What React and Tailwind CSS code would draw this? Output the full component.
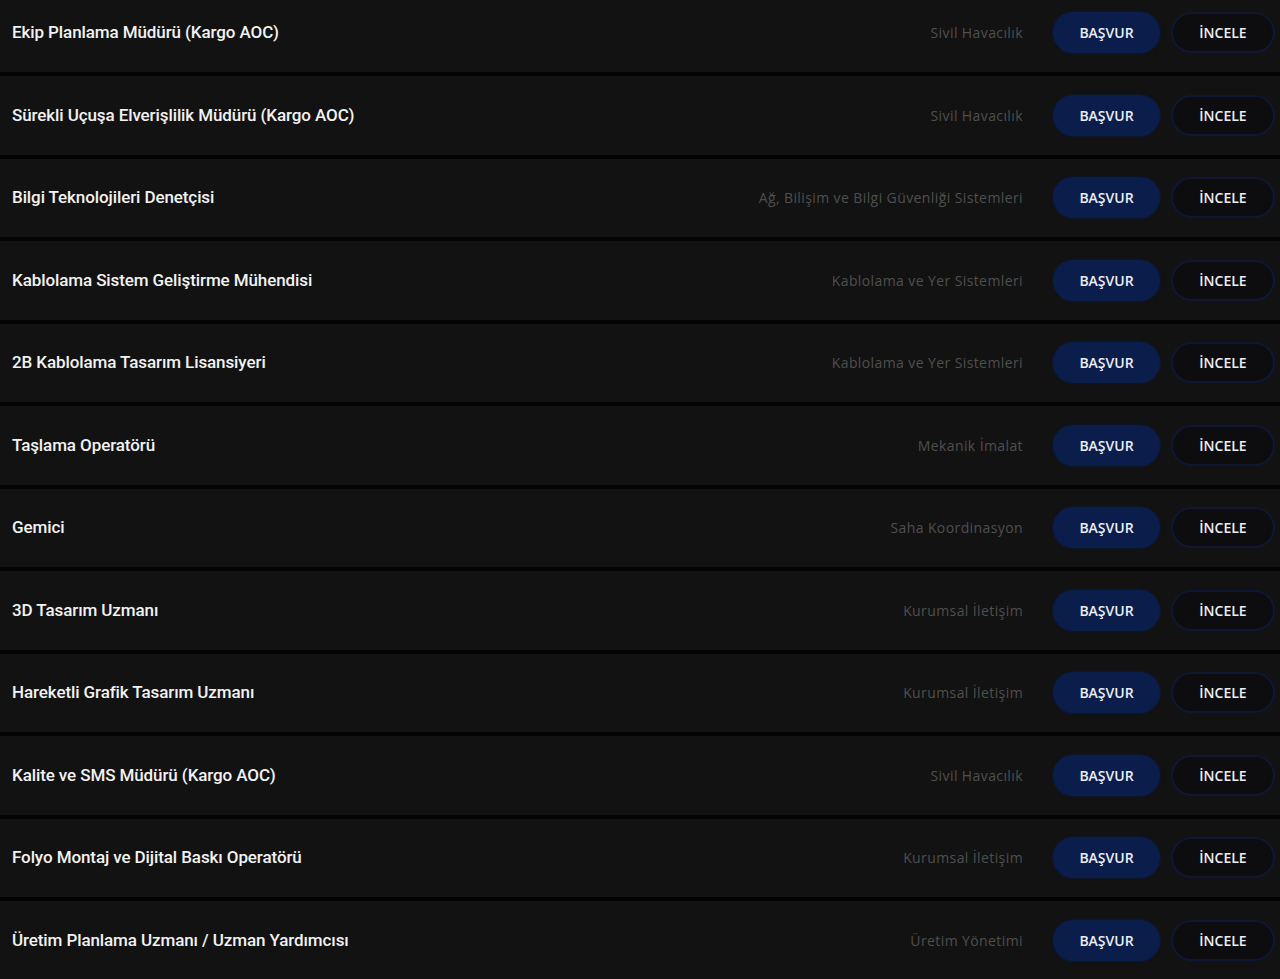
const jobs = [
  { title: 'Ekip Planlama Müdürü (Kargo AOC)', dept: 'Sivil Havacılık' },
  { title: 'Sürekli Uçuşa Elverişlilik Müdürü (Kargo AOC)', dept: 'Sivil Havacılık' },
  { title: 'Bilgi Teknolojileri Denetçisi', dept: 'Ağ, Bilişim ve Bilgi Güvenliği Sistemleri' },
  { title: 'Kablolama Sistem Geliştirme Mühendisi', dept: 'Kablolama ve Yer Sistemleri' },
  { title: '2B Kablolama Tasarım Lisansiyeri', dept: 'Kablolama ve Yer Sistemleri' },
  { title: 'Taşlama Operatörü', dept: 'Mekanik İmalat' },
  { title: 'Gemici', dept: 'Saha Koordinasyon' },
  { title: '3D Tasarım Uzmanı', dept: 'Kurumsal İletişim' },
  { title: 'Hareketli Grafik Tasarım Uzmanı', dept: 'Kurumsal İletişim' },
  { title: 'Kalite ve SMS Müdürü (Kargo AOC)', dept: 'Sivil Havacılık' },
  { title: 'Folyo Montaj ve Dijital Baskı Operatörü', dept: 'Kurumsal İletişim' },
  { title: 'Üretim Planlama Uzmanı / Uzman Yardımcısı', dept: 'Üretim Yönetimi' },
]

function JobRow({ title, dept }) {
  return (
    <div className="flex h-[78.5px] shrink-0 items-center bg-[#121212] pl-3 pr-[5px]">
      <span className="flex-1 font-['Roboto',sans-serif] text-[17px] font-medium tracking-[-0.1px] text-[#f2f2f2]">
        {title}
      </span>
      <span className="mr-[30px] font-['Open_Sans',sans-serif] text-[14px] tracking-[0.4px] text-[#4f4f4f]">{dept}</span>
      <button className="h-[41px] w-[107px] rounded-full bg-[#0b1d4a] font-['Open_Sans',sans-serif] text-[14px] font-semibold text-[#eceef5] shadow-[0_0_3px_#0b1d4a]">
        BAŞVUR
      </button>
      <button className="ml-[11px] h-[41px] w-[104px] rounded-full border-2 border-[#0e1733] bg-[#0d0d0f] font-['Open_Sans',sans-serif] text-[14px] font-semibold text-[#eceef5]">
        İNCELE
      </button>
    </div>
  )
}

export default function App() {
  return (
    <div className="h-[979px] overflow-hidden bg-[#030303]">
      <div className="-mt-[6.5px] flex flex-col gap-[4px]">
        {jobs.map((j, i) => (
          <JobRow key={i} {...j} />
        ))}
      </div>
    </div>
  )
}
